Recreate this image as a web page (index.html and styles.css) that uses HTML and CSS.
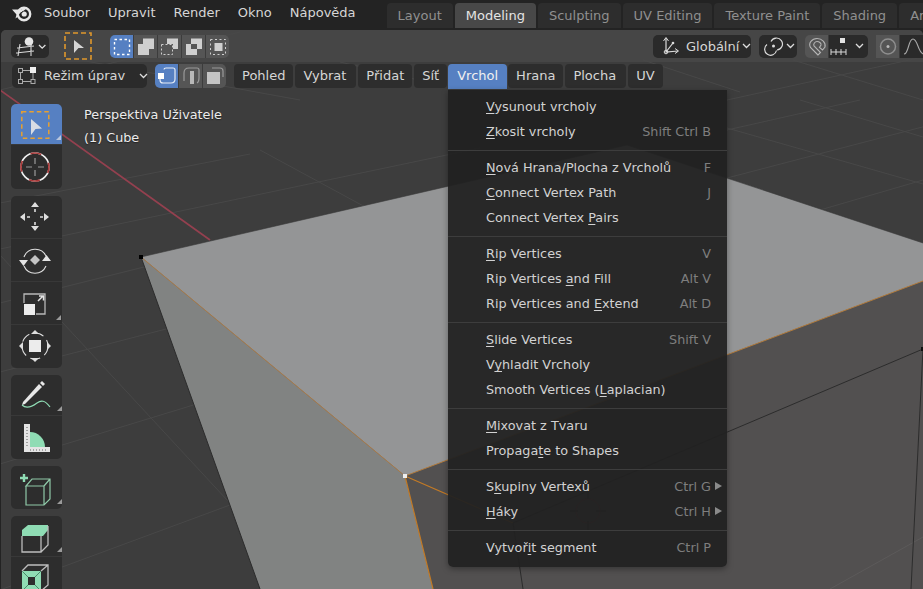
FILE: index.html
```html
<!DOCTYPE html>
<html lang="cs">
<head>
<meta charset="utf-8">
<title>Blender</title>
<link rel="stylesheet" href="styles.css">
</head>
<body>
<div class="app">
  <header class="topbar">
    <svg class="logo" width="22" height="20" viewBox="0 0 22 20">
      <circle cx="13" cy="10" r="6.2" fill="none" stroke="#e6e6e6" stroke-width="2.4"/>
      <circle cx="13.2" cy="10" r="2.6" fill="#e6e6e6"/>
      <path d="M1 5.5H10.5L14 3.2 15 5 6 11.5 8 11.8 4.5 14.5 5.5 10.5Z" fill="#e6e6e6"/>
      <path d="M9 9.5l3-2" stroke="#232323" stroke-width="1"/>
    </svg>
    <nav class="mainmenu"><span>Soubor</span><span>Upravit</span><span>Render</span><span>Okno</span><span>Nápověda</span></nav>
    <nav class="tabs"><span class="tab">Layout</span><span class="tab active">Modeling</span><span class="tab">Sculpting</span><span class="tab">UV Editing</span><span class="tab">Texture Paint</span><span class="tab">Shading</span><span class="tab">Animation</span></nav>
  </header>
  <main class="viewport">
    <svg class="scene" width="922" height="559" viewBox="1 30 922 559">
      <rect x="0" y="30" width="923" height="559" fill="#3d3d3d"/>
      <g stroke="#484848" stroke-width="1" fill="none">
        <path d="M0 203L250 154M0 249L480 148M0 303L160 263M0 372L170 328M0 464L200 403M0 590L230 505"/>
        <path d="M260 150L380 215M0 255L240 514M80 60L300 100"/>
        <path d="M727 130L860 100M727 178L930 125M820 210L923 180M727 100L923 57M727 128L923 184M800 100L923 137M793 60L923 100M643 60L740 92M340 62L440 85M0 90L240 32"/>
      </g>
      <path d="M0 90L210 240" stroke="#94404f" stroke-width="1.700"/>
      <polygon points="405,476 923,281 923,589 433,589" fill="#525050"/>
      <path d="M923 537L830 589" stroke="#5c5a5a"/>
      <polygon points="141,257 405,476 433,589 260,589" fill="#818382"/>
      <polygon points="141,257 627,145 923,243 923,281 405,476" fill="#949596"/>
      <path d="M141 257L260 589" stroke="#2c2c2c" stroke-width="1"/>
      <path d="M141 257L627 145L923 243" stroke="#3a3a3a" stroke-width=".6" fill="none"/>
      <path d="M141 257L405 476" stroke="#a87a48" stroke-width="1"/>
      <path d="M405 476L923 281" stroke="#b07a3c" stroke-width="1"/>
      <path d="M405 476L433 589M405 476L513 523" stroke="#c27a26" stroke-width="1.2"/>
      <path d="M513 523L923 349M923 349L911 589M513 523L523 589" stroke="#2c2c2c" stroke-width="1"/>
      <rect x="139" y="255" width="4" height="4" fill="#000"/>
      <rect x="403" y="474" width="4" height="4" fill="#eee"/>
      <rect x="921" y="347" width="4" height="4" fill="#111"/>
      <g fill="none" stroke="#8a3d4b" stroke-width="1"><circle cx="588" cy="511" r="12"/></g>
      <path d="M578 511h-8M606 511h-10M588 499v-8M588 531v-10" stroke="#2c2c2c"/>
    </svg>

    <div class="hdr hdr-tool">
      <span class="btn orient">
        <svg width="38" height="23" viewBox="0 0 38 23">
          <path d="M6 13L23 11M5 18L23 16M9 9L7 21M20 9L20 21" stroke="#d8d8d8" stroke-width="1.1" fill="none"/>
          <circle cx="18" cy="6.5" r="4.3" fill="#e4e4e4"/>
          <path d="M28 10l3.2 3.2 3.2-3.2" stroke="#ddd" stroke-width="1.3" fill="none"/>
        </svg>
      </span>
      <svg class="active-tool" width="28" height="28" viewBox="0 0 28 28">
        <rect x="1" y="1" width="26" height="26" fill="none" stroke="#e0982c" stroke-width="1.6" stroke-dasharray="5 3"/>
        <polygon points="10,8 20,16 14.500,16 10,21" fill="#d6d6d6"/>
      </svg>
      <div class="seg sel-modes">
        <span class="sq on"><svg width="24" height="23" viewBox="0 0 24 23"><rect x="4.500" y="4.500" width="15" height="15" fill="none" stroke="#fff" stroke-width="1.4" stroke-dasharray="2.500 2.500"/></svg></span>
        <span class="sq"><svg width="24" height="23" viewBox="0 0 24 23"><path d="M9 3.500H20V14H15V20H4V9H9Z" fill="#cfcfcf"/></svg></span>
        <span class="sq"><svg width="24" height="23" viewBox="0 0 24 23"><rect x="3.500" y="9.500" width="11" height="10" fill="none" stroke="#cfcfcf" stroke-dasharray="2 2"/><path d="M9 3.500H20V14H15V9H9Z" fill="#cfcfcf"/></svg></span>
        <span class="sq"><svg width="24" height="23" viewBox="0 0 24 23"><path d="M9 3.500H20V14H15V20H4V9H9ZM9 9V14H15V9Z" fill="#cfcfcf" fill-rule="evenodd"/></svg></span>
        <span class="sq"><svg width="24" height="23" viewBox="0 0 24 23"><rect x="4.500" y="4.500" width="15" height="15" fill="none" stroke="#cfcfcf" stroke-dasharray="2 2.500"/><rect x="8.500" y="8" width="8" height="8" fill="#cfcfcf"/></svg></span>
      </div>
      <span class="btn globalni">
        <svg width="20" height="20" viewBox="0 0 20 20"><path d="M6 2v14L18 15M6 16L13 7" stroke="#dcdcdc" stroke-width="1.2" fill="none"/><path d="M3.500 5L6 1.500 8.500 5M15 12.500l3.500 2.500-3.500 2.500" stroke="#dcdcdc" fill="none"/><circle cx="6" cy="16" r="1.800" fill="none" stroke="#dcdcdc"/><circle cx="13" cy="7" r="1.300" fill="#dcdcdc"/></svg>
        <span class="lbl">Globální</span>
        <svg class="chev" width="9" height="6" viewBox="0 0 9 6"><path d="M1 1l3.500 3.500L8 1" stroke="#ddd" stroke-width="1.300" fill="none"/></svg>
      </span>
      <span class="btn pivot">
        <svg width="20" height="20" viewBox="0 0 20 20"><path d="M7 5.500A6 6 0 1 1 13 14" fill="none" stroke="#dcdcdc" stroke-width="1.200"/><path d="M3 8.500A6 6 0 1 0 12.500 14.500" fill="none" stroke="#dcdcdc" stroke-width="1.200"/><circle cx="9.500" cy="10" r="1.500" fill="#dcdcdc"/></svg>
        <svg class="chev" width="9" height="6" viewBox="0 0 9 6"><path d="M1 1l3.500 3.500L8 1" stroke="#ddd" stroke-width="1.300" fill="none"/></svg>
      </span>
      <div class="seg snap">
        <span class="sq"><svg width="24" height="23" viewBox="0 0 24 23"><path d="M13 20L5.500 12.500C3 8 7 3.500 12 3.500S21 7.500 20 12L17.500 15 14.500 12.500 16 10C16.500 8 14 6.500 12 6.500S8 9 9 11L15.500 17.500Z" fill="none" stroke="#b4b4b4" stroke-width="1.100"/></svg></span>
        <span class="dark snapmode">
          <svg width="22" height="23" viewBox="0 0 22 23"><path d="M2 14v6M7 14v6M12 14v6M17 14v6M2 17h15" stroke="#d8d8d8" fill="none"/><rect x="11" y="3" width="5" height="5" fill="#e2e2e2"/></svg>
          <svg class="chev" width="9" height="6" viewBox="0 0 9 6"><path d="M1 1l3.500 3.500L8 1" stroke="#ddd" stroke-width="1.300" fill="none"/></svg>
        </span>
      </div>
      <div class="seg prop">
        <span class="sq"><svg width="24" height="23" viewBox="0 0 24 23"><circle cx="12" cy="11.500" r="7.500" fill="none" stroke="#8e8e8e" stroke-width="1.500"/><circle cx="12" cy="11.500" r="1.500" fill="#b8b8b8"/></svg></span>
        <span class="dark curve"><svg width="24" height="23" viewBox="0 0 24 23"><path d="M4 19C9 19 8 4 13 4S18 19 24 19" stroke="#a8a8a8" stroke-width="1.100" fill="none"/></svg></span>
      </div>
    </div>

    <div class="hdr hdr-edit">
      <span class="btn mode">
        <svg width="20" height="18" viewBox="0 0 20 18"><rect x="1.500" y="1.500" width="4" height="4" fill="none" stroke="#aaa"/><rect x="1.500" y="12.500" width="4" height="4" fill="none" stroke="#aaa"/><rect x="14" y="12.500" width="4" height="4" fill="none" stroke="#aaa"/><rect x="13" y="0" width="6" height="6" fill="#eee"/><path d="M6 3.500h7M3.500 6v6.500M6 14.500h8M16 6v6.500" stroke="#aaa" fill="none"/></svg>
        <span class="lbl">Režim úprav</span>
        <svg class="chev" width="9" height="6" viewBox="0 0 9 6"><path d="M1 1l3.500 3.500L8 1" stroke="#ddd" stroke-width="1.300" fill="none"/></svg>
      </span>
      <div class="seg edit-modes">
        <span class="sq on"><svg width="24" height="24" viewBox="0 0 24 24"><path d="M9 5.500Q9 4 11 4H18Q20 4 20 6V15Q20 19 16 19H8Q5 19 5 16V10" fill="none" stroke="#fff" stroke-width="1.200" stroke-opacity=".85"/><rect x="3" y="9" width="6" height="6" fill="#fff"/></svg></span>
        <span class="sq"><svg width="24" height="24" viewBox="0 0 24 24"><path d="M5 17V9Q5 4 10 4H18Q20 4 20 6V14Q20 18 18 19" fill="none" stroke="#9a9a9a" stroke-width="1.200"/><rect x="11" y="7" width="4" height="13" fill="#b8b8b8"/></svg></span>
        <span class="sq"><svg width="24" height="24" viewBox="0 0 24 24"><path d="M9 4H17Q20 4 20 7V13" fill="none" stroke="#9a9a9a" stroke-width="1.200"/><path d="M4 8H17V20H4Z" fill="#c4c4c4"/></svg></span>
      </div>
      <nav class="viewmenu"><span class="vm">Pohled</span><span class="vm wide">Vybrat</span><span class="vm">Přidat</span><span class="vm">Síť</span><span class="vm open">Vrchol</span><span class="vm">Hrana</span><span class="vm wide">Plocha</span><span class="vm">UV</span></nav>
    </div>

    <div class="work">
      <aside class="tools">
        <div class="tg">
          <span class="ti first on"><svg width="51" height="41" viewBox="0 0 51 41"><rect x="10.800" y="7.800" width="27" height="26.500" fill="none" stroke="#e8a030" stroke-width="1.500" stroke-dasharray="4.500 3"/><polygon points="20,15 31,24.500 24.500,25 20,31" fill="#d8dce4"/><polygon points="45,36 50,36 50,31" fill="#b9c6dd"/></svg></span>
          <span class="ti h44"><svg width="51" height="44" viewBox="0 0 51 44"><circle cx="24" cy="22" r="14" fill="none" stroke="#f0f0f0" stroke-width="1.600"/><circle cx="24" cy="22" r="14" fill="none" stroke="#a83838" stroke-width="1.700" stroke-dasharray="11 11" stroke-dashoffset="5"/><path d="M24 13v6M24 25v6M15 22h6M27 22h6" stroke="#9a9a9a" stroke-width="1.200"/></svg></span>
        </div>
        <div class="tg">
          <span class="ti"><svg width="51" height="43" viewBox="0 0 51 43"><path d="M24 6l4 5h-8ZM24 35l4-5h-8ZM9 21l5-4v8ZM38 21l-5-4v8Z" fill="#dedede"/><path d="M24 13v3M24 26v3M16 21h3M29 21h3" stroke="#dedede" stroke-width="1.600"/></svg></span>
          <span class="ti"><svg width="51" height="43" viewBox="0 0 51 43"><path d="M13 18A12 12 0 0 1 35 17M35 27A12 12 0 0 1 13 27" fill="none" stroke="#dedede" stroke-width="1.100"/><path d="M24 16l5 5-5 5-5-5Z" fill="#c4c4c4"/><path d="M8 21h9l-4.500 6ZM31 22h9l-4.500-6Z" fill="#e4e4e4"/></svg></span>
          <span class="ti"><svg width="51" height="43" viewBox="0 0 51 43"><path d="M13 21V12H34V32H25" fill="none" stroke="#b8b8b8" stroke-width="1.300"/><rect x="13" y="22" width="11" height="11" fill="#ececec"/><path d="M27 19L32 14M28 14h4.500V18.500" fill="none" stroke="#e4e4e4" stroke-width="1.500"/><polygon points="45,38 50,38 50,33" fill="#9a9a9a"/></svg></span>
          <span class="ti"><svg width="51" height="43" viewBox="0 0 51 43"><circle cx="24" cy="21" r="13" fill="none" stroke="#dedede" stroke-width="1.100" stroke-dasharray="10 5"/><rect x="18" y="15" width="12" height="12" fill="#ececec"/><path d="M24 5l4 4h-8ZM24 37l4-4h-8ZM8 21l4-4v8ZM40 21l-4-4v8Z" fill="#dedede"/></svg></span>
        </div>
        <div class="tg">
          <span class="ti h41"><svg width="51" height="41" viewBox="0 0 51 41"><path d="M12 27L11 30 14 29 31 12 28 9Z" fill="#e8e8e8"/><path d="M29 8l2-2 3 3-2 2Z" fill="#e8e8e8"/><path d="M11 30C16 35 22 31 26 28S34 25 39 32" fill="none" stroke="#8fdcb4" stroke-width="1.200"/><polygon points="46,36 51,36 51,31" fill="#9a9a9a"/></svg></span>
          <span class="ti"><svg width="51" height="43" viewBox="0 0 51 43"><path d="M19 16A15 15 0 0 1 34 31H19Z" fill="#8fdcb4"/><path d="M13 8h6v23h20v5H13Z" fill="#e4e4e4"/><path d="M16 11v20M19 34h18" stroke="#666" stroke-width="1.100" stroke-dasharray="1 2"/></svg></span>
        </div>
        <div class="tg">
          <span class="ti"><svg width="51" height="43" viewBox="0 0 51 43"><path d="M9 12h8M13 8v8" stroke="#8fdcb4" stroke-width="2.400"/><path d="M15 20V39H33L39 33V13H21L15 20H33V39M33 20L39 13" fill="none" stroke="#8fc9a8" stroke-width="1.200"/><polygon points="46,38 51,38 51,33" fill="#9a9a9a"/></svg></span>
        </div>
        <div class="tg">
          <span class="ti h41"><svg width="51" height="41" viewBox="0 0 51 41"><path d="M11 14L17 9H37V14L32 20H11Z" fill="#8fdcb4"/><path d="M11 20V36H30V20M30 36L37 29V10" fill="none" stroke="#bdbdbd" stroke-width="1.300"/><polygon points="46,36 51,36 51,31" fill="#9a9a9a"/></svg></span>
          <span class="ti h41"><svg width="51" height="41" viewBox="0 0 51 41"><path d="M11 14V34H30V14Z" fill="#8fdcb4"/><path d="M11 14L17 20M30 14L24 20M11 34L17 28M30 34L24 28" stroke="#4a8a6a"/><rect x="17" y="20" width="7" height="8" fill="#2d2d2d"/><path d="M11 14L17 8H37V28L30 34M30 14L37 8" fill="none" stroke="#bdbdbd" stroke-width="1.300"/></svg></span>
        </div>
      </aside>
      <div class="viewinfo"><p>Perspektiva Uživatele</p><p>(1) Cube</p></div>
    </div>
  </main>

  <section class="menu">
    <div class="mi"><span><u>V</u>ysunout vrcholy</span></div>
    <div class="mi"><span><u>Z</u>kosit vrcholy</span><kbd>Shift Ctrl B</kbd></div>
    <hr>
    <div class="mi"><span><u>N</u>ová Hrana/Plocha z Vrcholů</span><kbd>F</kbd></div>
    <div class="mi"><span><u>C</u>onnect Vertex Path</span><kbd>J</kbd></div>
    <div class="mi"><span>Connect Vertex <u>P</u>airs</span></div>
    <hr>
    <div class="mi"><span><u>R</u>ip Vertices</span><kbd>V</kbd></div>
    <div class="mi"><span>Rip Vertices <u>a</u>nd Fill</span><kbd>Alt V</kbd></div>
    <div class="mi"><span>Rip Vertices and <u>E</u>xtend</span><kbd>Alt D</kbd></div>
    <hr>
    <div class="mi"><span><u>S</u>lide Vertices</span><kbd>Shift V</kbd></div>
    <div class="mi"><span>V<u>y</u>hladit Vrcholy</span></div>
    <div class="mi"><span>Smooth Vertices (<u>L</u>aplacian)</span></div>
    <hr>
    <div class="mi"><span><u>M</u>ixovat z Tvaru</span></div>
    <div class="mi"><span>Propaga<u>t</u>e to Shapes</span></div>
    <hr>
    <div class="mi sub"><span>S<u>k</u>upiny Vertexů</span><kbd>Ctrl G</kbd></div>
    <div class="mi sub"><span><u>H</u>áky</span><kbd>Ctrl H</kbd></div>
    <hr>
    <div class="mi"><span>Vytvoř<u>i</u>t segment</span><kbd>Ctrl P</kbd></div>
  </section>
</div>
</body>
</html>
```
FILE: styles.css
```css
* { box-sizing: border-box; }
html, body { margin: 0; height: 100%; }
body { background: #232323; overflow: hidden; }
.app {
  position: relative;
  width: 923px;
  height: 589px;
  display: flex;
  flex-direction: column;
  overflow: hidden;
  font: 13px/1 "DejaVu Sans", sans-serif;
  color: #d6d6d6;
  background: #232323;
}
svg { display: block; flex: none; }

.topbar { height: 30px; display: flex; flex: none; }
.logo { margin: 4px 0 0 11px; }
.mainmenu { display: flex; gap: 18px; margin-left: 11px; padding-top: 5px; line-height: 15px; }
.tabs { display: flex; gap: 2px; margin-left: 31px; padding-top: 3px; }
.tab {
  flex: none;
  height: 25px;
  padding: 0 11px;
  line-height: 25px;
  color: #909090;
  background: #2d2d2d;
  border-radius: 4px 4px 0 0;
  white-space: nowrap;
}
.tab.active { color: #e4e4e4; background: #484848; }

.viewport {
  position: relative;
  flex: 1;
  margin-left: 1px;
  border-radius: 5px 5px 0 0;
  overflow: hidden;
}
.scene { position: absolute; left: 0; top: 0; }

.hdr { position: relative; display: flex; align-items: center; padding-left: 10px; white-space: nowrap; }
.hdr-tool { height: 32px; background: rgba(72, 72, 72, .86); }
.hdr-edit { height: 28px; padding: 0 0 1px 11px; }

.btn {
  display: flex;
  align-items: center;
  height: 23px;
  background: #2a2a2a;
  border-radius: 5px;
  flex: none;
}
.orient { width: 38px; }
.active-tool { margin: 0 18px 0 15px; }
.seg { display: flex; height: 23px; border-radius: 5px; overflow: hidden; flex: none; }
.sq { width: 24px; background: #555; box-shadow: inset -1px 0 0 #3c3c3c; }
.sq.on { background: #5680c2; }
.sel-modes { width: 119px; }
.globalni { width: 98px; margin-left: 424px; padding-left: 7px; }
.globalni .lbl { margin-left: 6px; }
.globalni .chev { margin-left: 3px; }
.pivot { width: 38px; margin-left: 8px; padding-left: 5px; }
.pivot .chev { margin-left: 2px; }
.snap { margin-left: 8px; width: 63px; }
.dark { background: #2a2a2a; display: flex; align-items: center; }
.snapmode { width: 39px; }
.snapmode .chev { margin-left: 4px; }
.prop { margin-left: 8px; border-radius: 5px 0 0 5px; overflow: visible; }
.curve { width: 30px; }

.hdr-edit .btn { height: 24px; }
.mode { width: 135px; padding-left: 5px; background: #2b2b2b; }
.mode .lbl { margin-left: 7px; }
.mode .chev { margin-left: 14px; }
.edit-modes { height: 24px; margin-left: 8px; width: 71px; }
.viewmenu { display: flex; gap: 2px; margin-left: 8px; }
.vm {
  height: 24px;
  padding: 0 8px;
  line-height: 24px;
  background: #2d2d2d;
  border-radius: 4px;
}
.vm.wide { padding-right: 10px; }
.vm.open { background: #5680c2; color: #f0f0f0; border-radius: 4px 4px 0 0; height: 25px; margin: 0 -1px -1px -1px; padding: 0 9px; }

.work { position: relative; display: flex; padding: 14px 0 0 10px; }
.tools { display: flex; flex-direction: column; gap: 7px; width: 51px; flex: none; }
.tg { background: #2d2d2d; border-radius: 5px; overflow: hidden; flex: none; }
.ti { display: block; height: 43px; box-shadow: inset 0 -1px 0 #383838; }
.ti:last-child { box-shadow: none; }
.ti.first { height: 41px; }
.ti.h44 { height: 44px; }
.ti.h41 { height: 41px; }
.ti.on { background: #5680c2; }
.viewinfo { margin: 1px 0 0 22px; color: #ececec; text-shadow: 0 1px 1px #222; font-size: 12.8px; }
.viewinfo p { margin: 0; height: 23px; line-height: 20px; }

.menu {
  position: absolute;
  left: 448px;
  top: 90px;
  width: 279px;
  height: 477px;
  padding-top: 4px;
  font-size: 12.8px;
  background: rgba(33, 33, 33, .94);
  border-radius: 0 0 5px 5px;
  box-shadow: 0 2px 6px rgba(0, 0, 0, .35);
}
.mi {
  position: relative;
  display: flex;
  justify-content: space-between;
  height: 25px;
  padding: 0 16px 0 38px;
  line-height: 25px;
  color: #d2d2d2;
}
.mi u { text-decoration: underline; text-decoration-thickness: 1px; text-underline-offset: 2px; text-decoration-skip-ink: none; }
.mi kbd { font: inherit; color: #7e7e7e; }
.mi.sub::after {
  content: "";
  position: absolute;
  right: 5px;
  top: 8px;
  border-left: 7px solid #8a8a8a;
  border-top: 4px solid transparent;
  border-bottom: 4px solid transparent;
}
.menu hr { height: 1px; margin: 6px 0 4px; border: 0; background: #3d3d3d; }
```
